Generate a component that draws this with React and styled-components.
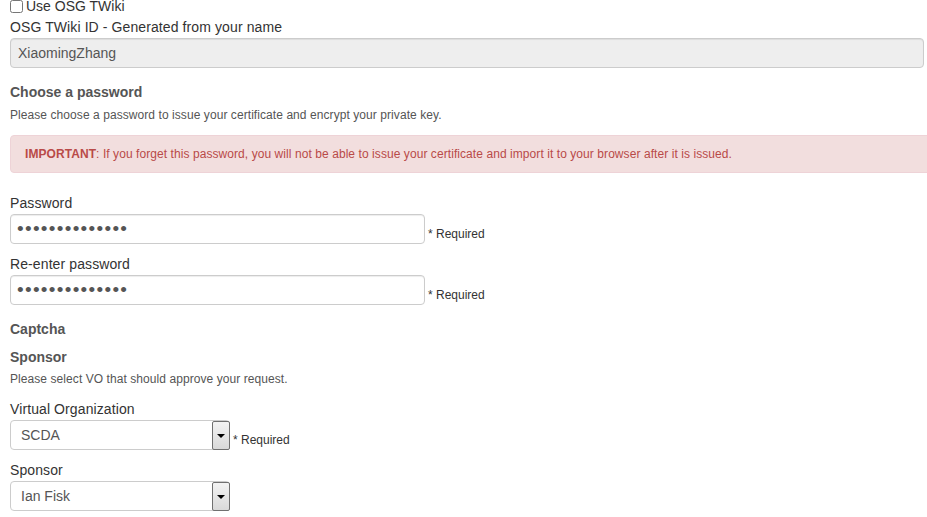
import styled, { createGlobalStyle } from "styled-components";

const GlobalStyle = createGlobalStyle`
  html, body {
    margin: 0;
    padding: 0;
    background: #fff;
  }
  body {
    font-family: "Liberation Sans", Arial, sans-serif;
    font-size: 14px;
    color: #333;
    overflow: hidden;
  }
`;

const Page = styled.form`
  padding: 0 0 0 10px;
  width: 1000px;
`;

const CheckRow = styled.label`
  display: flex;
  align-items: center;
  height: 13px;
  line-height: 13px;
  gap: 3px;
  margin-bottom: 4px;
  font-size: 14px;
  color: #333;
`;

const Check = styled.input`
  margin: 0;
  width: 13px;
  height: 13px;
`;

const Label = styled.div`
  line-height: 20px;
  font-size: 14px;
  color: #333;
  margin-bottom: 1px;
  letter-spacing: 0.1px;
`;

const Field = styled.div`
  margin-bottom: ${(p) => p.$gap ?? 10}px;
`;

const Row = styled.div`
  display: flex;
  align-items: flex-end;
  gap: 3px;
`;

const TextInput = styled.input`
  box-sizing: border-box;
  width: ${(p) => p.$width}px;
  height: 30px;
  margin: 0;
  padding: 4px 7px;
  font-family: "Liberation Sans", Arial, sans-serif;
  font-size: 14px;
  color: #555;
  background: ${(p) => (p.disabled ? "#eee" : "#fff")};
  border: 1px solid #ccc;
  border-radius: 4px;
  box-shadow: inset 0 1px 1px rgba(0, 0, 0, 0.075);
  outline: none;
  &[type="password"] {
    font-size: 19px;
    letter-spacing: 1.3px;
    padding-left: 6px;
  }
`;

const Required = styled.span`
  font-size: 12px;
  line-height: 16px;
  padding-bottom: 2px;
  color: #333;
`;

const Heading = styled.div`
  font-weight: bold;
  font-size: 14px;
  line-height: 20px;
  color: #555;
  margin-bottom: ${(p) => p.$gap ?? 4}px;
`;

const Help = styled.p`
  margin: 0 0 ${(p) => p.$gap}px;
  font-size: 12px;
  line-height: 18px;
  color: #555;
  letter-spacing: 0.07px;
`;

const Alert = styled.div`
  box-sizing: border-box;
  width: 960px;
  padding: 8px 35px 8px 14px;
  line-height: 20px;
  font-size: 12px;
  letter-spacing: 0.07px;
  color: #b94a48;
  background: #f2dede;
  border: 1px solid #eed3d7;
  border-radius: 4px;
  margin-bottom: 20px;
  b {
    font-weight: bold;
  }
`;

const SelectBox = styled.div`
  box-sizing: border-box;
  width: 220px;
  height: 30px;
  display: flex;
  align-items: stretch;
  border: 1px solid #ccc;
  border-radius: 4px;
  background: #fff;
`;

const SelectValue = styled.span`
  flex: 1;
  padding-left: 10px;
  display: flex;
  align-items: center;
  font-size: 14px;
  color: #555;
`;

const ArrowBox = styled.span`
  box-sizing: border-box;
  width: 18px;
  margin: 0 -1px -1px 0;
  display: flex;
  align-items: center;
  justify-content: center;
  border: 1px solid #707070;
  border-radius: 2px;
  background: linear-gradient(#f3f3f3, #d9d9d9);
  &::after {
    content: "";
    border-left: 4px solid transparent;
    border-right: 4px solid transparent;
    border-top: 4px solid #000;
  }
`;

function Select({ value }) {
  return (
    <SelectBox>
      <SelectValue>{value}</SelectValue>
      <ArrowBox />
    </SelectBox>
  );
}

export default function App() {
  return (
    <>
      <GlobalStyle />
      <Page onSubmit={(e) => e.preventDefault()}>
        <CheckRow>
          <Check type="checkbox" />
          Use OSG TWiki
        </CheckRow>
        <Field $gap={14}>
          <Label>OSG TWiki ID - Generated from your name</Label>
          <TextInput $width={914} disabled value="XiaomingZhang" readOnly />
        </Field>

        <Heading>Choose a password</Heading>
        <Help $gap={11}>
          Please choose a password to issue your certificate and encrypt your private key.
        </Help>
        <Alert>
          <b>IMPORTANT</b>: If you forget this password, you will not be able to issue your
          certificate and import it to your browser after it is issued.
        </Alert>

        <Field>
          <Label>Password</Label>
          <Row>
            <TextInput $width={415} type="password" value="aaaaaaaaaaaaaa" readOnly />
            <Required>* Required</Required>
          </Row>
        </Field>
        <Field $gap={14}>
          <Label>Re-enter password</Label>
          <Row>
            <TextInput $width={415} type="password" value="aaaaaaaaaaaaaa" readOnly />
            <Required>* Required</Required>
          </Row>
        </Field>

        <Heading $gap={8}>Captcha</Heading>
        <Heading $gap={3}>Sponsor</Heading>
        <Help $gap={11}>Please select VO that should approve your request.</Help>

        <Field>
          <Label>Virtual Organization</Label>
          <Row>
            <Select value="SCDA" />
            <Required>* Required</Required>
          </Row>
        </Field>
        <Field>
          <Label>Sponsor</Label>
          <Select value="Ian Fisk" />
        </Field>
      </Page>
    </>
  );
}
